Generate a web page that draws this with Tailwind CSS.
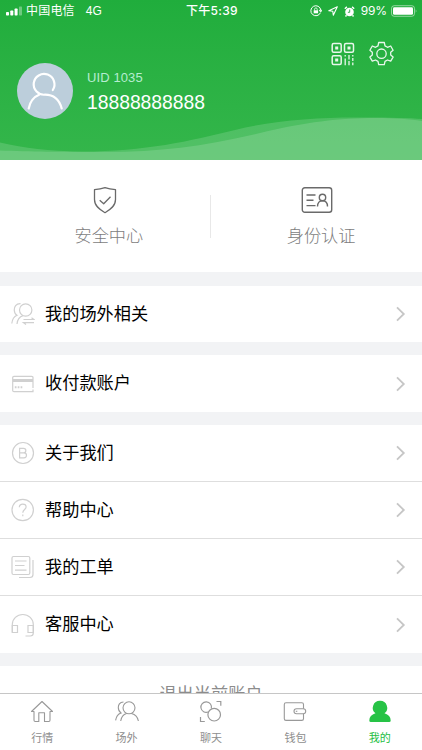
<!DOCTYPE html>
<html lang="zh-CN">
<head>
    <meta charset="UTF-8">
    <meta name="viewport" content="width=device-width, initial-scale=1.0">
    <title>我的</title>
    <script src="https://cdn.jsdelivr.net/npm/@tailwindcss/browser@4"></script>
</head>

<body class="bg-white font-['Liberation_Sans','Noto_Sans_CJK_SC',sans-serif] text-black">

    <div class="w-[422px] h-[750px] flex flex-col overflow-hidden">

        <!-- Header -->
        <header class="relative h-40 shrink-0 bg-linear-to-b from-[#20ad3c] to-[#34b64b] text-white">
            <svg class="absolute left-0 bottom-0 w-full h-[44px]" viewBox="0 0 422 44" fill="#fff">
                <path fill-opacity=".15" d="M0 26.500C25 32 48 35.500 82 35.500C145 35.500 190 25 235 14C275 4 320 1 365 1.500C390 1.500 410 2 422 3V44H0Z" />
                <path fill-opacity=".15" d="M0 34.500C30 35.500 60 36 105 36C160 36 205 30 260 17C305 6 340 2 375 2C395 2 410 3 422 5V44H0Z" />
            </svg>

            <!-- Status bar -->
            <div class="relative h-[22px] grid grid-cols-[1fr_auto_1fr] items-center pl-1.5 pr-1 text-xs leading-none">
                <div class="flex items-center">
                    <svg class="w-[17px] h-[10px]" viewBox="0 0 17 10" fill="#fff">
                        <rect x="0" y="6" width="3" height="3.500" rx=".7" />
                        <rect x="4.300" y="4.500" width="3" height="5" rx=".7" />
                        <rect x="8.600" y="2.500" width="3" height="7" rx=".7" />
                        <rect x="13" y=".5" width="3" height="9" rx=".7" opacity=".35" />
                    </svg>
                    <span class="ml-[3px] tracking-[.2px]">中国电信</span>
                    <span class="ml-[11px]">4G</span>
                </div>
                <span class="font-['Inter','Noto_Sans_CJK_SC',sans-serif] font-medium text-[12px] tracking-[.3px]">下午5:39</span>
                <div class="flex items-center justify-end">
                    <svg class="w-3 h-3 mr-[6px]" viewBox="0 0 12 12" fill="none" stroke="#fff">
                        <path d="M10.500 7.600A5 5 0 1 1 10.800 5M9.300 5.300h2.500L10.700 7z" />
                        <path d="M4.600 5.500V4.200a1.300 1.300 0 0 1 2.600 0v1.300" stroke-width=".8" />
                        <rect x="3.700" y="5.300" width="4.400" height="3" fill="#fff" stroke="none" />
                    </svg>
                    <svg class="w-[10px] h-[10px] mr-[6px]" viewBox="0 0 10 10" fill="none" stroke="#fff" stroke-width="1.100" stroke-linejoin="round">
                        <path d="M9.300.8.8 4.700l4 .5.500 4z" />
                    </svg>
                    <svg class="w-[11px] h-[11px] mr-[6px]" viewBox="0 0 11 11" fill="#fff">
                        <circle cx="5.500" cy="6" r="4.300" />
                        <path d="M.8 2.700 2.900.9M10.200 2.700 8.100.9M2.500 9.300l-1 1.200M8.500 9.300l1 1.200" stroke="#fff" stroke-width="1.400" />
                        <path d="M5.700 3.500v2.800H3.900" fill="none" stroke="#22ae3e" stroke-width=".9" />
                    </svg>
                    <span class="mr-[4px] font-['Inter'] tracking-[-.1px]">99%</span>
                    <svg class="w-[27px] h-[12px]" viewBox="0 0 27 12">
                        <rect x=".5" y=".7" width="23" height="10.600" rx="2.700" fill="none" stroke="#fff" stroke-opacity=".5" />
                        <rect x="2" y="2.200" width="20" height="7.600" rx="1.400" fill="#fff" />
                        <path d="M24.700 4.200q1.800 1.800 0 3.600z" fill="#fff" fill-opacity=".5" />
                    </svg>
                </div>
            </div>

            <!-- Header actions -->
            <div class="relative flex justify-end gap-[14px] pt-[20px] pr-[28px]">
                <svg class="w-6 h-6" viewBox="0 0 24 24" fill="none" stroke="#e9f7ec" stroke-width="1.500">
                    <rect x="1.200" y="1.500" width="9" height="8.800" rx="1.500" />
                    <rect x="13.500" y="1.500" width="9" height="8.800" rx="1.500" />
                    <rect x="1.200" y="13.700" width="9" height="8.800" rx="1.500" />
                    <path d="M4.200 5.900h3M16.500 5.900h3M4.200 18.100h3" stroke-width="3" />
                    <path d="M14.200 13v1.500M14.200 16.500v6.700M18 13v4.500M18 19v4.200M21.800 13v1.500M21.800 16v3M21.800 20.500v2.700" stroke-width="1.300" />
                </svg>
                <svg class="w-[25px] h-[25px] -mt-px" viewBox="0 0 25 25" fill="none" stroke="#e9f7ec" stroke-width="1.300" stroke-linejoin="round">
                    <path d="M9.700 1.500H15.300L16 4.900L18.500 6.300L21.700 5L24.100 9.300L21.700 11.300V14.100L24.100 16.100L21.700 20.200L18.500 19L16 20.400L15.300 23.700H9.700L9 20.400L6.500 19L3.300 20.200L.9 16.100L3.300 14.100V11.300L.9 9.300L3.300 5L6.500 6.300L9 4.900Z" />
                    <circle cx="12.500" cy="12.700" r="4.700" />
                </svg>
            </div>

            <!-- Profile -->
            <div class="relative flex items-center -mt-[3px] pl-[17px]">
                <svg class="w-14 h-14" viewBox="0 0 56 56" fill="none">
                    <circle cx="28" cy="28" r="28" fill="#bccedb" />
                    <path d="M35.800 27A10.400 10.400 0 1 0 28 31.700C37 31.700 42.500 37.500 44.700 45.500M22.500 31.500C16.500 34 13 38.500 11.700 45.500" stroke="#fff" stroke-width="2.200" stroke-linecap="round" />
                </svg>
                <div class="ml-[14px] mt-[3px]">
                    <p class="text-[13px] leading-4 tracking-[.1px] text-[#b5edd0]">UID 1035</p>
                    <p class="mt-[4px] text-[19.300px] leading-[26px]">18888888888</p>
                </div>
            </div>
        </header>

        <!-- Shortcuts -->
        <section class="h-28 shrink-0 flex items-center text-[17.200px] font-light text-[#7d7d7d]">
            <div class="flex-1 flex flex-col items-center pl-[8px]">
                <svg class="w-8 h-7 mr-[8px]" viewBox="0 0 32 28" fill="none" stroke="#6a6a6a" stroke-width="1.300" stroke-linejoin="round">
                    <path d="M16 1.600C19 2.600 22.500 3.300 26.500 3.700V13.500C26.500 20 21.500 23.500 16 26.700C10.500 23.500 5.500 20 5.500 13.500V3.700C9.500 3.300 13 2.600 16 1.600Z" />
                    <path d="m10.700 14.200 4 3.500 6.800-7" />
                </svg>
                <span class="mt-[10px] -mb-px leading-6">安全中心</span>
            </div>
            <div class="w-[1.500px] h-[43px] bg-[#e8e8e8]"></div>
            <div class="flex-1 flex flex-col items-center pl-[9px]">
                <svg class="w-8 h-7 mr-[8px]" viewBox="0 0 32 28" fill="none" stroke="#6a6a6a" stroke-width="1.400">
                    <rect x="1.300" y="1.800" width="29.400" height="24.400" rx="2.500" />
                    <path d="M5.500 9h9M5.500 14.300h7M5.500 19.600h9M16.500 20.500c0-4 2-5.800 5-5.800s5 1.800 5 5.800" />
                    <circle cx="21.500" cy="11.500" r="3.200" />
                </svg>
                <span class="mt-[10px] -mb-px leading-6">身份认证</span>
            </div>
        </section>

        <!-- Menu -->
        <main class="grow min-h-0 overflow-hidden bg-[#f2f3f5] pt-[14px] text-[17.200px]">
            <a class="h-14 flex items-center bg-white pl-[11px] pr-[16px]">
                <svg class="w-6 h-6 mr-[10px]" viewBox="0 0 24 24" fill="none" stroke="#d0d0d0" stroke-width="1.200">
                    <circle cx="14.700" cy="8" r="6.200" />
                    <path d="M9.500 1.700C5 1.500 3 5 3.300 8.500C3.500 11 4.500 12.500 6 13.200C3 14.500 1.200 17.500.8 21.500M12 13.700C8.500 14.700 6.500 17.500 6 22M12.500 17.500H23L20.500 15.700M23 20.700H12.500L15 22.500" />
                </svg>
                <span class="grow pt-0.5">我的场外相关</span>
                <svg class="w-[11px] h-4" viewBox="0 0 11 16" fill="none" stroke="#c6c6c6" stroke-width="1.800"><path d="m2 1.300 6.800 6.700L2 14.700" /></svg>
            </a>

            <a class="h-[57px] mt-[13px] flex items-center bg-white pl-[11px] pr-[16px]">
                <svg class="w-6 h-6 mr-[10px]" viewBox="0 0 24 24" fill="none" stroke="#d0d0d0" stroke-width="1.200">
                    <path d="M22 16V5.500Q22 4.300 20.800 4.300H3Q1.700 4.300 1.700 5.500V18.500Q1.700 19.700 3 19.700H22V17.500" />
                    <path d="M2 8.500h20" stroke-width="3" />
                    <path d="M3.800 15.300h8" stroke-width="2" stroke-dasharray="1.700 1.200" />
                </svg>
                <span class="grow">收付款账户</span>
                <svg class="w-[11px] h-4" viewBox="0 0 11 16" fill="none" stroke="#c6c6c6" stroke-width="1.800"><path d="m2 1.300 6.800 6.700L2 14.700" /></svg>
            </a>

            <div class="mt-[13px] h-[228px] bg-white divide-y divide-[#dedede]">
                <a class="h-[57px] flex items-center pl-[11px] pr-[16px]">
                    <svg class="w-6 h-6 mr-[10px]" viewBox="0 0 24 24" fill="none" stroke="#d0d0d0" stroke-width="1.200">
                        <circle cx="12" cy="12" r="10.500" />
                        <path d="M8.600 7.300h4a2.200 2.200 0 0 1 0 4.500h-4h4.400a2.500 2.500 0 0 1 0 5H8.600z" />
                    </svg>
                    <span class="grow pt-0.5">关于我们</span>
                    <svg class="w-[11px] h-4" viewBox="0 0 11 16" fill="none" stroke="#c6c6c6" stroke-width="1.800"><path d="m2 1.300 6.800 6.700L2 14.700" /></svg>
                </a>
                <a class="h-[57px] flex items-center pl-[11px] pr-[16px]">
                    <svg class="w-6 h-6 mr-[10px]" viewBox="0 0 24 24" fill="none" stroke="#d0d0d0" stroke-width="1.200">
                        <circle cx="11.700" cy="12" r="10.700" />
                        <path d="M8.300 9.200c.2-4.300 6.800-4 6.800-.3 0 2.600-3.300 2.700-3.300 5.800M11.800 16.500v1.700" />
                    </svg>
                    <span class="grow pt-0.5">帮助中心</span>
                    <svg class="w-[11px] h-4" viewBox="0 0 11 16" fill="none" stroke="#c6c6c6" stroke-width="1.800"><path d="m2 1.300 6.800 6.700L2 14.700" /></svg>
                </a>
                <a class="h-[57px] flex items-center pl-[11px] pr-[16px]">
                    <svg class="w-6 h-6 mr-[10px]" viewBox="0 0 24 24" fill="none" stroke="#d0d0d0" stroke-width="1.200">
                        <rect x="1" y="1.500" width="17.800" height="18" rx="1.500" />
                        <path d="M4 6h11.500M4 10.500h9.500M4 15.200h11.500M22 5v14.500q0 3-3 3H8" />
                    </svg>
                    <span class="grow pt-0.5">我的工单</span>
                    <svg class="w-[11px] h-4" viewBox="0 0 11 16" fill="none" stroke="#c6c6c6" stroke-width="1.800"><path d="m2 1.300 6.800 6.700L2 14.700" /></svg>
                </a>
                <a class="h-[57px] flex items-center pl-[11px] pr-[16px]">
                    <svg class="w-6 h-6 mr-[10px]" viewBox="0 0 24 24" fill="none" stroke="#d0d0d0" stroke-width="1.200">
                        <path d="M1.300 19.500V11.500a10.500 10 0 0 1 21 0V20q0 3-3 3H14.500" />
                        <path d="M1.300 12.500H6.500V19.500H1.300zM17 12.500h5.300v7H17z" />
                    </svg>
                    <span class="grow">客服中心</span>
                    <svg class="w-[11px] h-4" viewBox="0 0 11 16" fill="none" stroke="#c6c6c6" stroke-width="1.800"><path d="m2 1.300 6.800 6.700L2 14.700" /></svg>
                </a>
            </div>

            <button class="mt-[13px] w-full h-14 pt-0.5 bg-white text-center text-[17.200px] text-[#8c8c8c]">退出当前账户</button>
        </main>

        <!-- Tab bar -->
        <nav class="h-[57px] shrink-0 grid grid-cols-5 border-t border-[#c6c6c6] bg-white text-[11px] text-[#8e8e8e]">
            <a class="flex flex-col items-center pt-[6px]">
                <svg class="w-6 h-6" viewBox="0 0 24 24" fill="none" stroke="#999" stroke-width="1.100" stroke-linejoin="round">
                    <path d="M12 1.500 1.500 11.500H4V20.300Q4 21.500 5.200 21.500H8.800V12.800H14.500V21.500H18.800Q20 21.500 20 20.300V11.500H22.500Z" />
                </svg>
                <span class="mt-[6px] leading-4">行情</span>
            </a>
            <a class="flex flex-col items-center pt-[6px]">
                <svg class="w-6 h-6" viewBox="0 0 24 24" fill="none" stroke="#999" stroke-width="1.100">
                    <circle cx="14" cy="7.800" r="6" />
                    <path d="M8.500 2C4.500 2 3.300 5 3.300 7.600C3.300 10 4.500 12 6 13C3 14 1.200 16.500.6 20.300M11.500 13.500C8 14.500 6.300 17 5.700 21M16.500 13.500C20.500 14.500 22.700 17 23.400 21" />
                </svg>
                <span class="mt-[6px] leading-4">场外</span>
            </a>
            <a class="flex flex-col items-center pt-[6px]">
                <svg class="w-6 h-6" viewBox="0 0 24 24" fill="none" stroke="#999" stroke-width="1.200">
                    <path d="M9.200 12A5.300 5.300 0 1 1 12.300 8.500" />
                    <circle cx="15.200" cy="14.700" r="6.300" />
                    <path d="M17.500 1.500h4.300v4.300M1.500 17v4.500h4.300" />
                </svg>
                <span class="mt-[6px] leading-4">聊天</span>
            </a>
            <a class="flex flex-col items-center pt-[6px]">
                <svg class="w-6 h-6" viewBox="0 0 24 24" fill="none" stroke="#999" stroke-width="1.100">
                    <path d="M20.500 8.700V4.500Q20.500 2.800 18.800 2.800H3Q1.300 2.800 1.300 4.500V18.700Q1.300 20.400 3 20.400H18.800Q20.500 20.400 20.500 18.700V13.800" />
                    <rect x="11" y="8.700" width="11.700" height="5.100" rx="2.500" />
                    <path d="M12.800 11.300h1.500" />
                </svg>
                <span class="mt-[6px] leading-4">钱包</span>
            </a>
            <a class="flex flex-col items-center pt-[6px] text-[#24bd43]">
                <svg class="w-6 h-6" viewBox="0 0 24 24" fill="#27c346">
                    <path d="M12 .8a7 7 0 0 1 4.500 12.500C20.500 14.500 22.700 17 22.700 20.500Q22.700 22 21.200 22H2.800Q1.300 22 1.300 20.500C1.300 17 3.500 14.500 7.500 13.300A7 7 0 0 1 12 .8Z" />
                </svg>
                <span class="mt-[6px] leading-4">我的</span>
            </a>
        </nav>
    </div>

</body>
</html>
